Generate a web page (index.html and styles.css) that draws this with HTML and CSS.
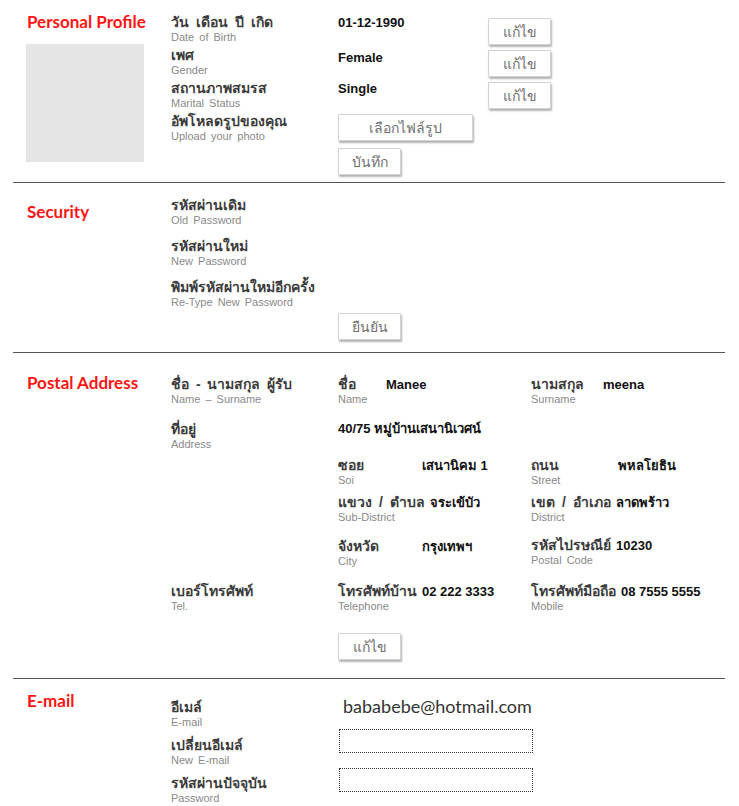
FILE: index.html
```html
<!DOCTYPE html>
<html lang="th">
<head>
    <meta charset="UTF-8">
    <meta name="viewport" content="width=device-width, initial-scale=1.0">
    <title>Profile</title>
    <link rel="stylesheet" href="styles.css">
</head>
<body>
<div class="page">

    <!-- Personal Profile -->
    <section class="section profile">
        <div class="side">
            <h2 class="title">Personal Profile</h2>
            <div class="photo"></div>
        </div>
        <div class="labels">
            <div class="lbl"><span class="th">วัน เดือน ปี เกิด</span><span class="en">Date of Birth</span></div>
            <div class="lbl"><span class="th">เพศ</span><span class="en">Gender</span></div>
            <div class="lbl"><span class="th">สถานภาพสมรส</span><span class="en">Marital Status</span></div>
            <div class="lbl"><span class="th">อัพโหลดรูปของคุณ</span><span class="en">Upload your photo</span></div>
        </div>
        <div class="values">
            <div class="val">01-12-1990</div>
            <div class="val">Female</div>
            <div class="val">Single</div>
            <button class="btn btn-file">เลือกไฟล์รูป</button>
            <button class="btn">บันทึก</button>
        </div>
        <div class="edits">
            <button class="btn">แก้ไข</button>
            <button class="btn">แก้ไข</button>
            <button class="btn">แก้ไข</button>
        </div>
    </section>

    <!-- Security -->
    <section class="section security">
        <div class="side">
            <h2 class="title">Security</h2>
        </div>
        <div class="labels">
            <div class="lbl"><span class="th">รหัสผ่านเดิม</span><span class="en">Old Password</span></div>
            <div class="lbl"><span class="th">รหัสผ่านใหม่</span><span class="en">New Password</span></div>
            <div class="lbl"><span class="th">พิมพ์รหัสผ่านใหม่อีกครั้ง</span><span class="en">Re-Type New Password</span></div>
        </div>
        <div class="actions">
            <button class="btn">ยืนยัน</button>
        </div>
    </section>

    <!-- Postal Address -->
    <section class="section postal">
        <div class="side">
            <h2 class="title">Postal Address</h2>
        </div>

        <div class="lbl row-name"><span class="th">ชื่อ - นามสกุล ผู้รับ</span><span class="en">Name – Surname</span></div>
        <div class="pairs row-name">
            <div class="pair"><div class="lbl lw-48"><span class="th">ชื่อ</span><span class="en">Name</span></div><span class="pv">Manee</span></div>
            <div class="pair"><div class="lbl lw-72"><span class="th">นามสกุล</span><span class="en">Surname</span></div><span class="pv">meena</span></div>
        </div>

        <div class="lbl row-addr"><span class="th">ที่อยู่</span><span class="en">Address</span></div>
        <div class="addr row-addr">
            <div class="addr-line">40/75 หมู่บ้านเสนานิเวศน์</div>
            <div class="pairs">
                <div class="pair"><div class="lbl lw-84"><span class="th">ซอย</span><span class="en">Soi</span></div><span class="pv">เสนานิคม 1</span></div>
                <div class="pair"><div class="lbl lw-87"><span class="th">ถนน</span><span class="en">Street</span></div><span class="pv">พหลโยธิน</span></div>
            </div>
            <div class="pairs gap-sm">
                <div class="pair"><div class="lbl"><span class="th">แขวง / ตำบล</span><span class="en">Sub-District</span></div><span class="pv">จระเข้บัว</span></div>
                <div class="pair"><div class="lbl lw-79"><span class="th">เขต / อำเภอ</span><span class="en">District</span></div><span class="pv">ลาดพร้าว</span></div>
            </div>
            <div class="pairs gap-md">
                <div class="pair"><div class="lbl lw-84"><span class="th">จังหวัด</span><span class="en">City</span></div><span class="pv">กรุงเทพฯ</span></div>
                <div class="pair"><div class="lbl lw-78"><span class="th">รหัสไปรษณีย์</span><span class="en">Postal Code</span></div><span class="pv">10230</span></div>
            </div>
        </div>

        <div class="lbl row-tel"><span class="th">เบอร์โทรศัพท์</span><span class="en">Tel.</span></div>
        <div class="pairs row-tel">
            <div class="pair"><div class="lbl lw-84"><span class="th">โทรศัพท์บ้าน</span><span class="en">Telephone</span></div><span class="pv">02 222 3333</span></div>
            <div class="pair"><div class="lbl"><span class="th">โทรศัพท์มือถือ</span><span class="en">Mobile</span></div><span class="pv">08 7555 5555</span></div>
        </div>

        <div class="actions row-btn">
            <button class="btn">แก้ไข</button>
        </div>
    </section>

    <!-- E-mail -->
    <section class="section email">
        <div class="side">
            <h2 class="title">E-mail</h2>
        </div>
        <div class="labels">
            <div class="lbl"><span class="th">อีเมล์</span><span class="en">E-mail</span></div>
            <div class="lbl"><span class="th">เปลี่ยนอีเมล์</span><span class="en">New E-mail</span></div>
            <div class="lbl"><span class="th">รหัสผ่านปัจจุบัน</span><span class="en">Password</span></div>
        </div>
        <div class="values">
            <div class="mail">bababebe@hotmail.com</div>
            <input class="field" type="text">
            <input class="field" type="password">
        </div>
    </section>

</div>
</body>
</html>
```

FILE: styles.css
```css
body {
    margin: 0;
    padding: 0;
    background: #ffffff;
    color: #222;
    font-family: "Liberation Sans", "Noto Sans", sans-serif;
}

.page {
    width: 712px;
    margin-left: 13px;
}

.section {
    display: grid;
    grid-template-columns: 158px 167px 150px 1fr;
    border-bottom: 1px solid #555;
}

.side {
    padding-left: 14px;
}

.title {
    margin: 0;
    font-family: Lato, "Liberation Sans", sans-serif;
    font-size: 17px;
    line-height: 20px;
    font-weight: 700;
    color: #ff1414;
}

.photo {
    width: 118px;
    height: 118px;
    margin: 12px 0 0 -1px;
    background: #e5e5e5;
}

/* label blocks: thai on top, english under */
.lbl {
    display: flex;
    flex-direction: column;
    white-space: nowrap;
}

.lbl .th {
    font-size: 14px;
    line-height: 18px;
    color: #3c3c3c;
    font-weight: 600;
    word-spacing: 3px;
}

.lbl .en {
    font-size: 11px;
    line-height: 12px;
    color: #8a8a8a;
    word-spacing: 2px;
}

.labels {
    display: flex;
    flex-direction: column;
    gap: 3px;
}

.values {
    display: flex;
    flex-direction: column;
    align-items: flex-start;
}

.val {
    font-size: 13px;
    line-height: 16px;
    font-weight: bold;
    color: #111;
    margin-bottom: 17px;
}

.btn {
    width: 63px;
    height: 27px;
    padding: 0;
    background: #fff;
    border: 1px solid #d2d2d2;
    border-radius: 1px;
    box-shadow: 1px 2px 2px rgba(0, 0, 0, 0.3);
    font-family: "Liberation Sans", "Noto Sans", sans-serif;
    font-size: 14px;
    color: #707070;
}

.edits {
    display: flex;
    flex-direction: column;
    gap: 5px;
    padding-top: 18px;
}

/* Personal Profile */
.profile .side { padding-top: 12px; }
.profile .labels { padding-top: 13px; }
.profile .values { padding-top: 15px; padding-bottom: 7px; }
.profile .val:nth-child(1) { margin-bottom: 19px; }
.profile .val:nth-child(2) { margin-bottom: 15px; }
.profile .val:nth-child(3) { margin-bottom: 17px; }
.profile .btn-file { width: 135px; margin-bottom: 7px; }

/* Security */
.security .side { padding-top: 19px; grid-row: 1 / 3; }
.security .labels { padding-top: 13px; gap: 11px; }
.security .actions {
    grid-column: 3;
    grid-row: 2;
    padding: 5px 0 12px;
}

/* Postal Address */
.postal {
    grid-template-columns: 158px 167px 1fr;
    padding-bottom: 18px;
}
.postal .side { padding-top: 20px; grid-row: 1 / 5; }
.postal .row-name { grid-row: 1; margin-top: 22px; }
.postal .row-addr { grid-row: 2; margin-top: 15px; }
.postal .row-tel { grid-row: 3; margin-top: 15px; }
.postal .row-btn { grid-row: 4; grid-column: 3; margin-top: 21px; }

.pairs {
    display: flex;
}

.pair {
    width: 193px;
    display: flex;
    align-items: baseline;
}

.pair .lbl {
    flex-shrink: 0;
    padding-right: 5px;
}

.lw-48 { min-width: 43px; }
.lw-72 { min-width: 67px; }
.lw-78 { min-width: 73px; }
.lw-79 { min-width: 74px; }
.lw-84 { min-width: 79px; }
.lw-87 { min-width: 82px; }

.pv {
    font-size: 13px;
    font-weight: bold;
    color: #111;
    white-space: nowrap;
}

.addr-line {
    font-size: 13px;
    line-height: 18px;
    font-weight: bold;
    color: #111;
    margin-bottom: 17px;
}

.gap-sm { margin-top: 6px; }
.gap-md { margin-top: 13px; }

/* E-mail */
.email { border-bottom: none; }
.email .side { padding-top: 12px; }
.email .labels { padding-top: 19px; gap: 8px; }
.email .values { padding-top: 16px; grid-column: 3 / 5; }

.mail {
    font-family: Lato, "Liberation Sans", sans-serif;
    font-size: 18px;
    line-height: 22px;
    color: #333;
    margin-left: 5px;
}

.field {
    width: 194px;
    height: 24px;
    box-sizing: border-box;
    margin: 12px 0 0 1px;
    border: 1px dotted #333;
    background: #fff;
}

.field + .field { margin-top: 15px; }
```
